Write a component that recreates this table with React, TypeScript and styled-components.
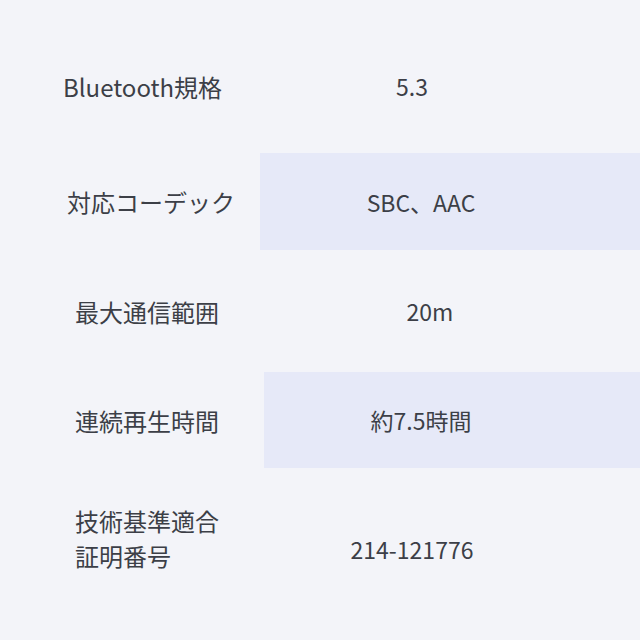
import styled, {createGlobalStyle} from "styled-components";

const GlobalStyle = createGlobalStyle`
  html, body {
    margin: 0;
    padding: 0;
    background-color: #f3f4f9;
  }

  body {
    font-family: "Noto Sans CJK JP", "Noto Sans", sans-serif;
    color: #3c3f47;
    -webkit-font-smoothing: antialiased;
  }
`

const Table = styled.div`
  width: 640px;
  height: 640px;
  display: flex;
  flex-direction: column;
  background-color: #f3f4f9;
`

const Row = styled.div<{ $height: number; $split: number; $align?: string }>`
  height: ${p => p.$height}px;
  display: grid;
  grid-template-columns: ${p => p.$split}px 1fr;
  align-items: ${p => p.$align || "center"};
`

const Label = styled.div<{ $indent: number; $offset?: number }>`
  padding-left: ${p => p.$indent}px;
  padding-top: ${p => p.$offset || 0}px;
  font-size: 24px;
  line-height: 35px;
  white-space: nowrap;
`

const Value = styled.div<{ $highlight?: boolean; $offset?: number; $fill?: number; $shift?: number }>`
  height: ${p => p.$fill ? `${p.$fill}px` : "100%"};
  display: flex;
  align-items: center;
  justify-content: center;
  box-sizing: border-box;
  padding-right: ${p => 64 - 2 * (p.$shift || 0)}px;
  padding-top: ${p => p.$offset || 0}px;
  background-color: ${p => p.$highlight ? "#e6e9f8" : "transparent"};
  font-size: 23px;
  white-space: nowrap;
`

const specs = [
  {label: ["Bluetooth規格"], value: "5.3", height: 153, split: 260, indent: 63, labelOffset: 19, valueOffset: 19, shift: -6},
  {label: ["対応コーデック"], value: "SBC、AAC", height: 97, split: 260, indent: 67, highlight: true, shift: 3},
  {label: ["最大通信範囲"], value: "20m", height: 122, split: 260, indent: 75, shift: 12},
  {label: ["連続再生時間"], value: "約7.5時間", height: 96, split: 264, indent: 75, highlight: true, shift: 1},
  {label: ["技術基準適合", "証明番号"], value: "214-121776", height: 172, split: 260, indent: 75, labelOffset: 35, fill: 162, align: "start", shift: -6},
]

function App() {
  return (
    <>
      <GlobalStyle/>
      <Table>
        {specs.map(spec => (
          <Row key={spec.value} $height={spec.height} $split={spec.split} $align={spec.align}>
            <Label $indent={spec.indent} $offset={spec.labelOffset}>
              {spec.label.map(line => <div key={line}>{line}</div>)}
            </Label>
            <Value $highlight={spec.highlight} $offset={spec.valueOffset} $fill={spec.fill} $shift={spec.shift}>
              {spec.value}
            </Value>
          </Row>
        ))}
      </Table>
    </>
  );
}

export default App;
